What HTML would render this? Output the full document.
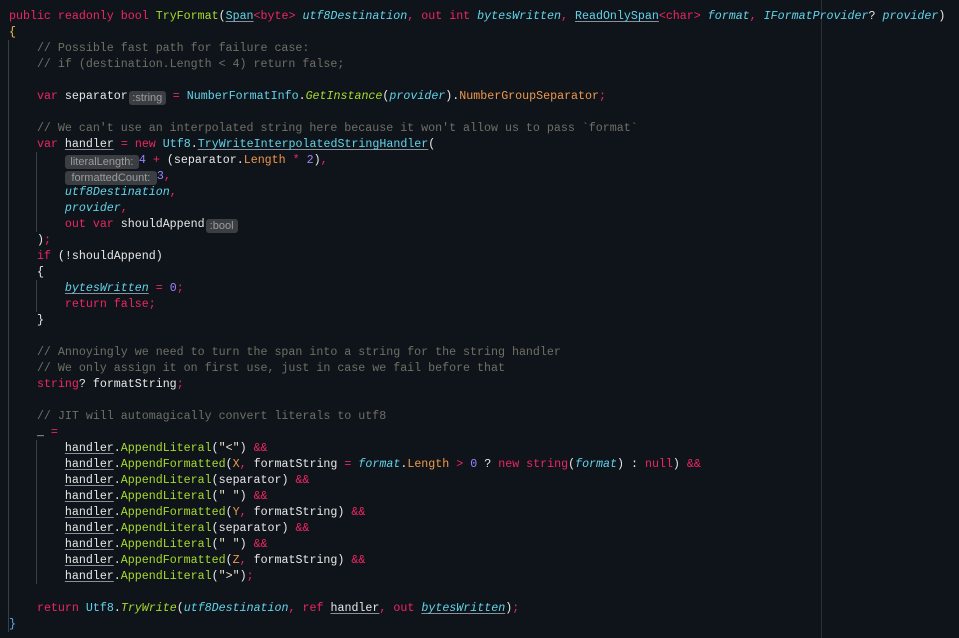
<!DOCTYPE html>
<html><head><meta charset="utf-8"><style>
html,body{margin:0;padding:0;background:#0f141b;width:959px;height:638px;overflow:hidden}
#c{position:absolute;left:9px;top:9px;font-family:"Liberation Mono",monospace;font-size:11.65px;line-height:16px;color:#e8e8e8}
.l{height:16px;white-space:pre}
.k{color:#ec2660}.f{color:#a6da2e}.t{color:#62d3e8}.p{color:#62d3e8;font-style:italic}
.c{color:#6f6f64}.m{color:#f0974a}.n{color:#9e82ff}.s{color:#e8e4c8}.o{color:#ec2660}
.u{text-decoration:underline;text-decoration-color:#8a9099;text-underline-offset:2px}
.h{display:inline-block;background:#3b3e43;color:#9c9c9c;font-family:"Liberation Sans",sans-serif;font-size:11px;line-height:14px;border-radius:3px;height:14px;vertical-align:-2px;text-align:center}
.g{position:absolute;width:1px;background:#3a3f47}
</style></head><body>
<div style="position:absolute;left:821px;top:0;width:1px;height:638px;background:#2a2f37"></div>
<div class="g" style="left:8px;top:40px;height:592px"></div>
<div class="g" style="left:36px;top:152px;height:80px"></div>
<div class="g" style="left:36px;top:280px;height:32px"></div>
<div class="g" style="left:36px;top:440px;height:144px"></div>
<div id="c"><div class="l"><span class="k">public readonly bool</span> <span class="f">TryFormat</span>(<span class="t u">Span</span><span class="k">&lt;byte&gt;</span> <span class="p">utf8Destination</span><span class="o">,</span> <span class="k">out int</span> <span class="p">bytesWritten</span><span class="o">,</span> <span class="t u">ReadOnlySpan</span><span class="k">&lt;char&gt;</span> <span class="p">format</span><span class="o">,</span> <span class="p">IFormatProvider</span>? <span class="p">provider</span>)</div>
<div class="l"><span style="color:#f0c040">{</span></div>
<div class="l"><span class="c">    // Possible fast path for failure case:</span></div>
<div class="l"><span class="c">    // if (destination.Length &lt; 4) return false;</span></div>
<div class="l"> </div>
<div class="l">    <span class="k">var</span> separator<span class="h" style="width:37px;margin-left:1px">:string</span> <span class="o">=</span> <span class="t">NumberFormatInfo</span>.<span class="f" style="font-style:italic">GetInstance</span>(<span class="p">provider</span>).<span class="m">NumberGroupSeparator</span><span class="o">;</span></div>
<div class="l"> </div>
<div class="l"><span class="c">    // We can't use an interpolated string here because it won't allow us to pass `format`</span></div>
<div class="l">    <span class="k">var</span> <span class="u">handler</span> <span class="o">=</span> <span class="k">new</span> <span class="t">Utf8</span>.<span class="t u">TryWriteInterpolatedStringHandler</span>(</div>
<div class="l">        <span class="h" style="width:74px">literalLength:</span><span class="n">4</span> <span class="o">+</span> (separator.<span class="m">Length</span> <span class="o">*</span> <span class="n">2</span>)<span class="o">,</span></div>
<div class="l">        <span class="h" style="width:92px">formattedCount:</span><span class="n">3</span><span class="o">,</span></div>
<div class="l">        <span class="p">utf8Destination</span><span class="o">,</span></div>
<div class="l">        <span class="p">provider</span><span class="o">,</span></div>
<div class="l">        <span class="k">out var</span> shouldAppend<span class="h" style="width:32px;margin-left:1px">:bool</span></div>
<div class="l">    )<span class="o">;</span></div>
<div class="l">    <span class="k">if</span> (!shouldAppend)</div>
<div class="l">    {</div>
<div class="l">        <span class="p u">bytesWritten</span> <span class="o">=</span> <span class="n">0</span><span class="o">;</span></div>
<div class="l">        <span class="k">return false;</span></div>
<div class="l">    }</div>
<div class="l"> </div>
<div class="l"><span class="c">    // Annoyingly we need to turn the span into a string for the string handler</span></div>
<div class="l"><span class="c">    // We only assign it on first use, just in case we fail before that</span></div>
<div class="l">    <span class="k">string</span>? formatString<span class="o">;</span></div>
<div class="l"> </div>
<div class="l"><span class="c">    // JIT will automagically convert literals to utf8</span></div>
<div class="l">    _ <span class="o">=</span></div>
<div class="l">        <span class="u">handler</span>.<span class="f">AppendLiteral</span>(<span class="s">"&lt;"</span>) <span class="o">&amp;&amp;</span></div>
<div class="l">        <span class="u">handler</span>.<span class="f">AppendFormatted</span>(<span class="m">X</span><span class="o">,</span> formatString <span class="o">=</span> <span class="p">format</span>.<span class="m">Length</span> <span class="o">&gt;</span> <span class="n">0</span> ? <span class="k">new string</span>(<span class="p">format</span>) : <span class="k">null</span>) <span class="o">&amp;&amp;</span></div>
<div class="l">        <span class="u">handler</span>.<span class="f">AppendLiteral</span>(separator) <span class="o">&amp;&amp;</span></div>
<div class="l">        <span class="u">handler</span>.<span class="f">AppendLiteral</span>(<span class="s">" "</span>) <span class="o">&amp;&amp;</span></div>
<div class="l">        <span class="u">handler</span>.<span class="f">AppendFormatted</span>(<span class="m">Y</span><span class="o">,</span> formatString) <span class="o">&amp;&amp;</span></div>
<div class="l">        <span class="u">handler</span>.<span class="f">AppendLiteral</span>(separator) <span class="o">&amp;&amp;</span></div>
<div class="l">        <span class="u">handler</span>.<span class="f">AppendLiteral</span>(<span class="s">" "</span>) <span class="o">&amp;&amp;</span></div>
<div class="l">        <span class="u">handler</span>.<span class="f">AppendFormatted</span>(<span class="m">Z</span><span class="o">,</span> formatString) <span class="o">&amp;&amp;</span></div>
<div class="l">        <span class="u">handler</span>.<span class="f">AppendLiteral</span>(<span class="s">"&gt;"</span>)<span class="o">;</span></div>
<div class="l"> </div>
<div class="l">    <span class="k">return</span> <span class="t">Utf8</span>.<span class="f" style="font-style:italic">TryWrite</span>(<span class="p">utf8Destination</span><span class="o">,</span> <span class="k">ref</span> <span class="u">handler</span><span class="o">,</span> <span class="k">out</span> <span class="p u">bytesWritten</span>)<span class="o">;</span></div>
<div class="l"><span style="color:#62a8e8">}</span></div></div>
</body></html>
